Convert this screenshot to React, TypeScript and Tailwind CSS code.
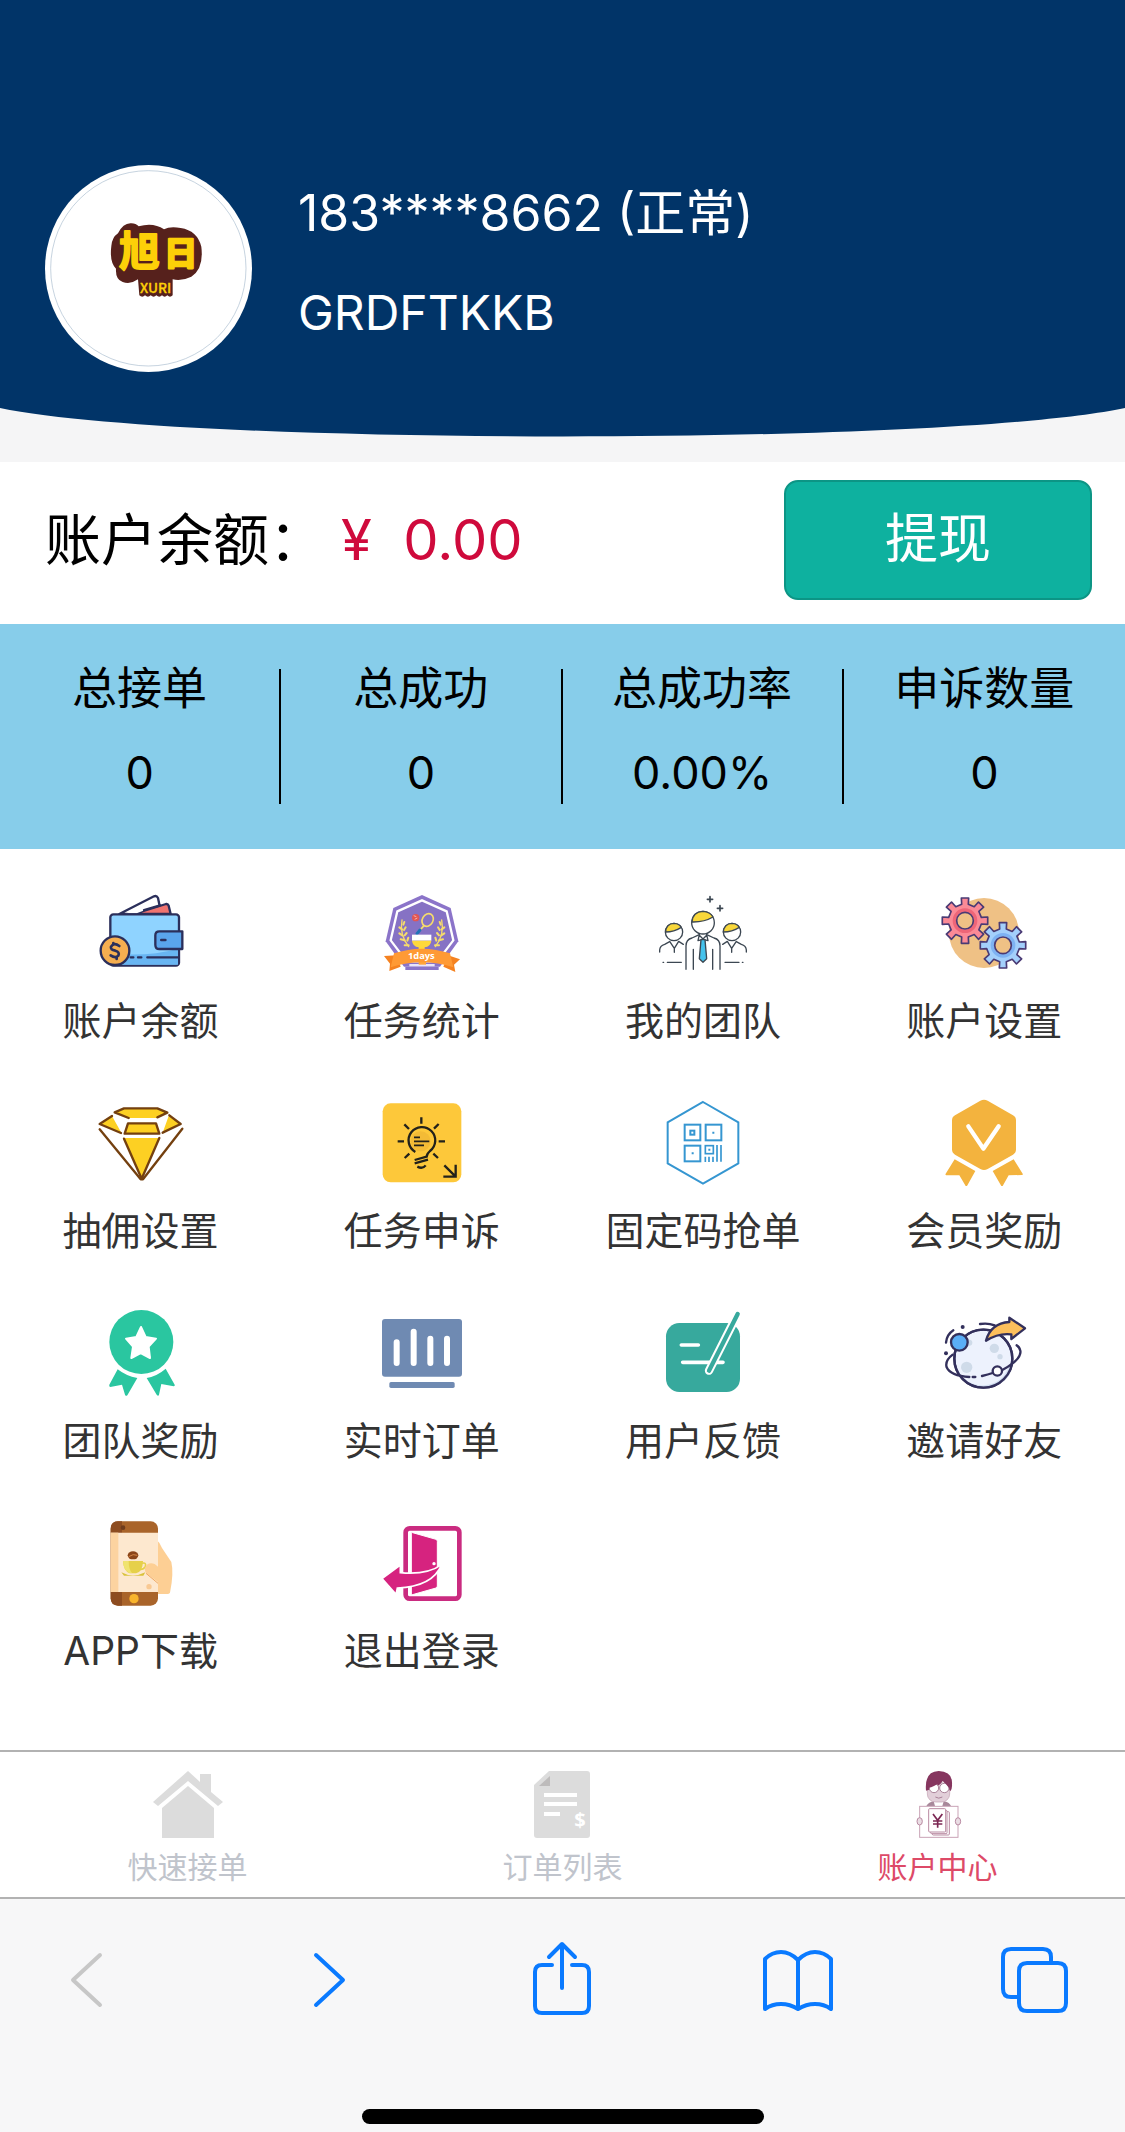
import { ReactNode } from "react";

function WalletIcon() {
  return (
    <svg viewBox="108 51 270 270" className="size-[90px]" aria-hidden="true">
      <g stroke="#2b2f5b" strokeWidth="7" strokeLinejoin="round" strokeLinecap="round">
        <path d="M178 132 L282 79 Q290 76 294 84 L304 132Z" fill="#fff" />
        <path d="M222 132 L318 102 Q324 101 326 107 L332 132Z" fill="#f0736f" />
        <path d="M196 130 L250 110 L250 122 L230 130Z" fill="#fff" stroke="none" />
        <path d="M252 120 L300 106" />
        <rect x="151" y="133" width="206" height="154" rx="9" fill="#8fd3ff" />
        <path d="M154 250 Q260 262 354 236 L354 284 L158 284Z" fill="#68b5f2" stroke="none" />
        <path d="M262 262 H354 M234 262 h10 M212 262 h8" />
        <path d="M367 184 H298 Q286 184 286 196 V224 Q286 237 298 237 H367Z" fill="#5aa5ec" />
        <path d="M304 210 h12" strokeWidth="8" />
        <circle cx="165" cy="242" r="43" fill="#f5ae50" />
        <path d="M178 228 Q162 216 153 230 Q150 240 166 242 Q180 246 175 257 Q166 266 152 256 M160 219 V224 M170 262 V267" fill="none" strokeWidth="8" />
      </g>
    </svg>
  );
}

function BadgeIcon() {
  return (
    <svg viewBox="951 51 270 270" className="size-[90px]" aria-hidden="true">
      <path d="M1086 75 L1172 114 L1195 214 L1140 290 L1032 290 L977 214 L1000 114Z" fill="#8b74c9" />
      <path d="M1086 91 L1160 124 L1180 211 L1132 274 L1040 274 L992 211 L1012 124Z" fill="#8672c4" stroke="#fff" strokeWidth="7" />
      <g fill="none" stroke="#f6dc6b" strokeLinecap="round">
        <path d="M1026 150 Q1018 195 1046 230 M1145 150 Q1154 195 1126 230" strokeWidth="4" />
        <path d="M1030 164 l3 -8 M1018 172 l8 6 M1032 180 l5 -8 M1018 190 l9 6 M1034 196 l6 -7 M1022 208 l12 3 M1042 212 l3 -9 M1034 226 l12 0 M1142 164 l-3 -8 M1153 172 l-8 6 M1139 180 l-5 -8 M1153 190 l-9 6 M1137 196 l-6 -7 M1149 208 l-12 3 M1129 212 l-3 -9 M1137 226 l-12 0" strokeWidth="6" />
        <ellipse cx="1103" cy="150" rx="16" ry="20" transform="rotate(30 1103 150)" strokeWidth="5" />
        <path d="M1092 167 L1082 178" strokeWidth="5" />
      </g>
      <path d="M1080 180 L1071 191" stroke="#2173b8" strokeWidth="9" strokeLinecap="round" />
      <circle cx="1067" cy="143" r="11" fill="#e25552" />
      <path d="M1061 137 l8 3 M1064 148 l8 -4" stroke="#f7b3a8" strokeWidth="3" />
      <path d="M1056 194 H1114 V212 H1056Z" fill="#fff" />
      <path d="M1056 212 H1114 Q1112 230 1094 232 V244 H1076 V232 Q1058 230 1056 212Z" fill="#ffd83c" />
      <path d="M1036 290 h100 v10 h-100Z" fill="#8b74c9" />
      <path d="M1048 282 h76 v7 h-76Z" fill="#e9e4fb" />
      <path d="M1076 270 h22 v14 h-22Z" fill="#ffa63b" />
      <path d="M972 258 L1010 256 L1022 290 L988 303 L990 281Z M1200 268 L1164 256 L1150 290 L1186 306 L1182 284Z" fill="#f58220" />
      <path d="M1002 250 Q1086 222 1170 250 L1180 292 Q1086 262 992 292Z" fill="#ff9a35" />
      <text x="1084" y="268" fontSize="28" fontWeight="700" fill="#fff" textAnchor="middle" className="font-['Open_Sans',sans-serif]">
        1days
      </text>
    </svg>
  );
}

function TeamIcon() {
  return (
    <svg viewBox="114 51 270 270" className="size-[90px]" aria-hidden="true">
      <g fill="none" stroke="#3c4752" strokeWidth="4" strokeLinecap="round" strokeLinejoin="round">
        <circle cx="249" cy="158" r="34" />
        <path d="M216 156 Q218 125 249 124 Q270 125 279 141 Q252 157 216 156Z" fill="#f8d73a" />
        <circle cx="162" cy="186" r="26" />
        <path d="M137 186 Q138 161 162 160 Q178 161 184 172 Q162 186 137 186Z" fill="#f8d73a" />
        <circle cx="336" cy="186" r="26" />
        <path d="M310 186 Q312 161 336 160 Q352 161 358 172 Q336 186 310 186Z" fill="#f8d73a" />
        <path d="M198 298 V228 Q198 208 216 204 L238 194 M300 298 V228 Q300 208 282 204 L260 194" />
        <path d="M220 238 V298 M278 238 V298" />
        <path d="M238 194 L234 212 L249 208 L264 212 L260 194 M238 196 L249 207 L260 196" />
        <path d="M243 209 H255 L260 266 L249 277 L238 266Z" fill="#45c2ec" />
        <path d="M119 246 V240 Q120 227 134 223 L149 215 M149 214 L163 235 L176 214 L190 223 M163 235 V247" />
        <path d="M379 246 V240 Q378 227 364 223 L349 215 M349 214 L335 235 L322 214 L308 223 M335 235 V247" />
        <path d="M142 277 H184 M129 277 h2 M315 277 H357 M367 277 h2" />
        <path d="M270 80 V96 M262 88 H278 M300 107 V123 M292 115 H308" strokeWidth="5" />
      </g>
    </svg>
  );
}

interface GearProps {
  cx: number;
  cy: number;
  color: string;
  shade: string;
}

function Gear({ cx, cy, color, shade }: GearProps) {
  const points: string[] = [];
  for (let i = 0; i < 8; i++) {
    const mid = (i * Math.PI) / 4;
    // root, tip, tip, root of each tooth
    for (const [offset, r] of [[-0.2, 50], [-0.16, 69], [0.16, 69], [0.2, 50]]) {
      points.push(`${cx + r * Math.cos(mid + offset)},${cy + r * Math.sin(mid + offset)}`);
    }
  }
  return (
    <>
      <polygon points={points.join(" ")} fill={color} stroke="#4a3a74" strokeWidth="5" strokeLinejoin="round" />
      <circle cx={cx} cy={cy} r="32" fill="none" stroke={shade} strokeWidth="10" />
      <circle cx={cx} cy={cy} r="25" fill="#efc185" stroke="#4a3a74" strokeWidth="5" />
    </>
  );
}

function GearsIcon() {
  return (
    <svg viewBox="957 51 270 270" className="size-[90px]" aria-hidden="true">
      <circle cx="1092" cy="189" r="105" fill="#efc185" />
      <Gear cx={1035} cy={152} color="#fb8a96" shade="#ee6678" />
      <Gear cx={1149} cy={226} color="#a3cffb" shade="#7eb2f3" />
    </svg>
  );
}

function DiamondIcon() {
  return (
    <svg viewBox="108 51 270 270" className="size-[90px]" aria-hidden="true">
      <g fill="none" stroke="#74400f" strokeWidth="7" strokeLinejoin="round" strokeLinecap="round">
        <path d="M164 97 L192 85 H292 L322 98 L292 114 H206Z" fill="#fdd023" stroke="none" />
        <path d="M206 114 L164 97 L192 85 H292 L322 98 L292 112" />
        <path d="M156 108 L184 158 L120 132Z M326 108 L308 158 L362 132Z" fill="#fdd023" stroke="none" />
        <path d="M156 108 L119 132 L183 159 M328 106 L362 132 L308 158" />
        <path d="M204 130 H288 L298 161 H194Z" fill="#fdd023" />
        <path d="M192 174 H298 L245 298Z" fill="#fdd023" stroke="none" />
        <path d="M192 176 L245 296 L298 174" />
        <path d="M119 148 L242 298 H249 L367 146" />
      </g>
    </svg>
  );
}

function BulbIcon() {
  return (
    <svg viewBox="951 51 270 270" className="size-[90px]" aria-hidden="true">
      <rect x="968" y="70" width="236" height="237" rx="24" fill="#fdc83a" />
      <circle cx="1082" cy="184" r="30" fill="#f3bb36" />
      <g fill="none" stroke="#23221b" strokeWidth="7">
        <path d="M1066 216 A40 40 0 1 1 1110 213 Q1100 222 1100 230 L1064 240" />
        <path d="M1064 250 L1104 239 M1072 260 Q1088 268 1097 256" />
        <path d="M1062 172 H1080 M1062 184 H1108 M1062 196 H1092" strokeWidth="5" />
        <path d="M1084 112 V131 M1033 133 L1047 147 M1136 132 L1122 146 M1013 184 H1032 M1136 184 H1155 M1034 234 L1048 221 M1134 234 L1120 221" />
        <path d="M1153 256 L1187 290 M1187 254 V290 H1150" />
      </g>
    </svg>
  );
}

function QrIcon() {
  return (
    <svg viewBox="114 51 270 270" className="size-[90px]" aria-hidden="true">
      <g fill="none" stroke="#3596d1" strokeWidth="6">
        <path d="M249 66 L355 127 V250 L249 311 L143 250 V127Z" />
        <rect x="194" y="134" width="47" height="47" />
        <rect x="257" y="134" width="47" height="47" />
        <rect x="194" y="197" width="47" height="47" />
        <rect x="211" y="152" width="12" height="12" />
        <rect x="256" y="197" width="24" height="24" strokeWidth="5" />
        <path d="M291 195 V245 M303 195 V245 M256 230 V246 M267 230 V246 M279 230 V246" strokeWidth="5" />
      </g>
      <path d="M277 155 h6 v6 h-6Z M215 217 h6 v6 h-6Z M265 206 h6 v6 h-6Z" fill="#3596d1" />
    </svg>
  );
}

function MemberIcon() {
  return (
    <svg viewBox="957 51 270 270" className="size-[90px]" aria-hidden="true">
      <path d="M1081 62 Q1092 57 1103 62 L1179 106 Q1188 111 1188 121 V208 Q1188 219 1179 224 L1103 267 Q1092 273 1081 267 L1005 224 Q996 219 996 208 V121 Q996 111 1005 106Z" fill="#f3b33e" />
      <path d="M1045 139 L1090 206 L1136 139" fill="none" stroke="#fff" strokeWidth="13" strokeLinecap="round" strokeLinejoin="round" />
      <path d="M1004 238 L1066 273 L1041 318 H1037 L1018 286 H979 Q975 285 977 281Z M1181 238 L1118 273 L1144 318 H1148 L1166 286 L1206 285 Q1210 284 1208 281Z" fill="#f3b33e" />
    </svg>
  );
}

function StarIcon() {
  return (
    <svg viewBox="108 51 270 270" className="size-[90px]" aria-hidden="true">
      <circle cx="244" cy="156" r="96" fill="#2ac6a0" />
      <path d="M243 111 L257 141 L288 146 L266 170 L270 204 L242 189 L214 204 L219 170 L198 146 L229 141Z" fill="#fff" stroke="#fff" strokeWidth="6" strokeLinejoin="round" />
      <path d="M173 238 Q198 258 232 264 L202 316 Q198 320 195 314 L186 284 L151 291 Q146 290 148 284Z M317 236 Q292 258 260 264 L290 314 Q295 320 297 314 L304 282 L341 289 Q346 288 344 284Z" fill="#2ac6a0" />
    </svg>
  );
}

function OrdersIcon() {
  return (
    <svg viewBox="951 51 270 270" className="size-[90px]" aria-hidden="true">
      <rect x="966" y="87" width="240" height="173" rx="9" fill="#6f8ab2" />
      <rect x="988" y="276" width="196" height="18" rx="5" fill="#6f8ab2" />
      <path d="M1010 157 V219 M1061 125 V219 M1111 146 V219 M1161 146 V219" stroke="#fff" strokeWidth="18" strokeLinecap="round" />
    </svg>
  );
}

function FeedbackIcon() {
  return (
    <svg viewBox="114 51 270 270" className="size-[90px]" aria-hidden="true">
      <rect x="138" y="99" width="222" height="207" rx="40" fill="#37a99d" />
      <path d="M184 165 H235 M188 217 H309" stroke="#fff" strokeWidth="11" strokeLinecap="round" />
      <path d="M353 72 L267 242" stroke="#fff" strokeWidth="25" strokeLinecap="round" />
      <path d="M353 72 L267 242" stroke="#37a99d" strokeWidth="13" strokeLinecap="round" />
    </svg>
  );
}

function InviteIcon() {
  return (
    <svg viewBox="957 51 270 270" className="size-[90px]" aria-hidden="true">
      <g fill="none" stroke="#33305c" strokeWidth="7" strokeLinecap="round" strokeLinejoin="round">
        <circle cx="1090" cy="206" r="87" fill="#edf2fd" />
        <path d="M1010 238 Q1040 290 1094 286 Q1150 280 1168 226 Q1180 262 1136 282 Q1088 302 1040 274Z" fill="#d3e0f2" stroke="none" />
        <g fill="#cfdbe9" stroke="none">
          <circle cx="1123" cy="175" r="14" />
          <circle cx="1140" cy="200" r="8" />
          <circle cx="1040" cy="232" r="17" />
          <circle cx="1048" cy="158" r="9" />
        </g>
        <circle cx="1090" cy="206" r="87" />
        <path d="M998 194 Q974 212 980 232 Q992 258 1048 261 M1058 261 h8 M1086 258 Q1104 254 1118 249 M1147 240 Q1206 208 1201 182 Q1198 170 1190 166" />
        <circle cx="1132" cy="243" r="14" fill="#fff" />
        <circle cx="1018" cy="157" r="25" fill="#5aaef6" />
        <path d="M978 158 Q980 134 1000 121 M1080 102 Q1104 98 1124 106" />
        <path d="M1098 152 Q1112 100 1168 96 V83 L1215 115 L1174 147 V133 Q1136 128 1098 152Z" fill="#fcbf5c" />
      </g>
      <circle cx="1028" cy="111" r="6" fill="#33305c" />
      <circle cx="978" cy="190" r="6" fill="#33305c" />
    </svg>
  );
}

function AppIcon() {
  return (
    <svg viewBox="108 51 270 270" className="size-[90px]" aria-hidden="true">
      <path d="M288 118 Q300 128 306 144 L334 186 Q342 220 330 278 Q328 282 322 282 H288Z" fill="#fdcf94" />
      <rect x="152" y="64" width="142" height="253" rx="22" fill="#a9642a" />
      <path d="M174 64 H186 V317 H174 Q152 317 152 295 V86 Q152 64 174 64Z" fill="#8d4c20" />
      <path d="M152 98 H294 V276 H152Z" fill="#fde8cf" />
      <path d="M152 98 H175 V276 H152Z" fill="#fcd3a0" />
      <circle cx="189" cy="83" r="7" fill="#6f3c1c" />
      <circle cx="222" cy="296" r="14" fill="#f8b42c" />
      <ellipse cx="219" cy="166" rx="16" ry="12" fill="#8b4518" />
      <path d="M206 170 Q220 160 232 166" stroke="#d58746" strokeWidth="3" fill="none" />
      <path d="M189 183 H249 Q248 216 228 220 H209 Q190 212 189 183Z" fill="#e6d04a" />
      <path d="M189 183 H206 Q206 208 216 219 H209 Q190 212 189 183Z" fill="#f0e36f" />
      <path d="M246 190 Q260 186 256 200 Q250 210 238 208" fill="none" stroke="#e6d04a" strokeWidth="5" />
      <path d="M184 217 Q218 236 256 217 L250 227 H192Z" fill="#d9c23c" />
      <path d="M254 206 Q262 184 284 192 L306 210 L306 276 L294 246 L262 222 Q254 216 254 206Z" fill="#fdcf94" />
      <path d="M258 220 L294 250" stroke="#f0a860" strokeWidth="3" />
      <circle cx="267" cy="260" r="8" fill="#f9c993" />
    </svg>
  );
}

function LogoutIcon() {
  return (
    <svg viewBox="951 51 270 270" className="size-[90px]" aria-hidden="true">
      <rect x="1037" y="85" width="161" height="211" rx="12" fill="#fff" stroke="#ca2b80" strokeWidth="14" />
      <path d="M1054 98 Q1054 97 1058 98 L1128 118 Q1132 119 1132 124 V258 Q1132 263 1128 264 L1054 285Z" fill="#d6237f" stroke="#fff" strokeWidth="3" />
      <circle cx="1122" cy="191" r="5" fill="#fff" />
      <path d="M966 236 L1021 195 V218 Q1100 226 1145 194 Q1118 260 1012 264 L1008 283Z" fill="#d6237f" stroke="#fff" strokeWidth="5" />
    </svg>
  );
}

function HomeIcon() {
  return (
    <svg viewBox="0 0 72 72" className="size-[72px]" aria-hidden="true">
      <path d="M36 2 L48 13 V5 H59 V23 L71 33 L66 37 L36 12 L6 37 L1 33Z M36 17 L62 39 V69 H10 V39Z" fill="#dcdcdc" />
    </svg>
  );
}

function ListIcon() {
  return (
    <svg viewBox="0 0 72 72" className="size-[72px]" aria-hidden="true">
      <path d="M22 2 H60 Q63 2 63 5 V66 Q63 69 60 69 H10 Q7 69 7 66 V16Z" fill="#dcdcdc" />
      <path d="M23 7 V17 H12Z" fill="#bdbbbb" />
      <path d="M17 24 H50 V28 H17Z M17 33 H50 V37 H17Z M17 43 H33 V47 H17Z" fill="#fff" />
      <text x="53" y="58" fontSize="20" fontWeight="700" fill="#fff" textAnchor="middle" className="font-['Noto_Sans',sans-serif]">
        $
      </text>
    </svg>
  );
}

function PersonIcon() {
  return (
    <svg viewBox="125 87 216 216" className="size-[72px]" aria-hidden="true">
      <path d="M198 198 Q204 186 222 184 L236 194 L252 184 Q268 188 272 198Z" fill="#a8889a" />
      <path d="M220 184 H250 L246 198 H224Z" fill="#fff" />
      <rect x="201" y="128" width="67" height="58" rx="24" fill="#e2cfd9" stroke="#c3a0b2" strokeWidth="2" />
      <path d="M197 152 Q192 94 235 93 Q278 94 275 134 Q276 146 270 154 Q262 138 248 122 Q236 142 197 152Z" fill="#86365f" />
      <circle cx="221" cy="144" r="14" fill="#fff" stroke="#a98198" strokeWidth="3" />
      <circle cx="252" cy="144" r="14" fill="#fff" stroke="#a98198" strokeWidth="3" />
      <path d="M202 144 Q222 140 247 122 Q258 132 268 146 Q276 96 235 95 Q196 98 202 144Z" fill="#86365f" />
      <path d="M225 171 Q235 178 246 171" fill="none" stroke="#a98198" strokeWidth="3" />
      <rect x="178" y="199" width="115" height="93" fill="#fff" stroke="#c9a3b6" strokeWidth="3" />
      <g fill="#fff" stroke="#b98aa2" strokeWidth="3">
        <rect x="216" y="215" width="51" height="70" rx="3" />
        <rect x="211" y="211" width="49" height="70" rx="3" />
        <rect x="205" y="206" width="51" height="70" rx="3" />
        <ellipse cx="178" cy="244" rx="8" ry="11" fill="#eadde4" />
        <ellipse cx="293" cy="244" rx="8" ry="11" fill="#eadde4" />
      </g>
      <path d="M218 222 L232 241 L246 222 M232 241 V263 M218 243 H246 M218 252 H246" fill="none" stroke="#7c2854" strokeWidth="5" />
    </svg>
  );
}

function Logo() {
  return (
    <svg viewBox="-135 -105 621 621" className="size-full" role="img" aria-label="XURI">
      <circle cx="175" cy="205" r="293" fill="none" stroke="#a9bccf" strokeWidth="2" />
      <path d="M84 100 Q100 68 124 70 Q138 70 146 79 Q190 66 222 88 Q240 78 272 84 Q322 92 334 140 Q342 206 304 230 Q276 244 248 238 V286 q-8 8 -16 0 q-8 8 -16 0 q-8 8 -17 0 q-8 8 -17 0 q-8 8 -17 0 q-8 8 -17 0 L144 238 Q122 254 98 246 Q76 238 78 206 Q58 186 64 138 Q66 112 84 100Z" fill="#56211c" />
      <g fill="#fdd008" stroke="#fdd008" strokeLinejoin="round" className="font-['Noto_Sans_CJK_SC',sans-serif]">
        <text x="88" y="199" fontSize="122" fontWeight="700" strokeWidth="6">
          旭
        </text>
        <text x="222" y="194" fontSize="100" fontWeight="700" strokeWidth="8">
          日
        </text>
        <text x="150" y="279" fontSize="41" fontWeight="500" strokeWidth="1">
          XURI
        </text>
      </g>
    </svg>
  );
}

interface Entry {
  label: string;
  icon: ReactNode;
}

const stats = [
  { label: "总接单", value: "0" },
  { label: "总成功", value: "0" },
  { label: "总成功率", value: "0.00%" },
  { label: "申诉数量", value: "0" },
];

const entries: Entry[] = [
  { label: "账户余额", icon: <WalletIcon /> },
  { label: "任务统计", icon: <BadgeIcon /> },
  { label: "我的团队", icon: <TeamIcon /> },
  { label: "账户设置", icon: <GearsIcon /> },
  { label: "抽佣设置", icon: <DiamondIcon /> },
  { label: "任务申诉", icon: <BulbIcon /> },
  { label: "固定码抢单", icon: <QrIcon /> },
  { label: "会员奖励", icon: <MemberIcon /> },
  { label: "团队奖励", icon: <StarIcon /> },
  { label: "实时订单", icon: <OrdersIcon /> },
  { label: "用户反馈", icon: <FeedbackIcon /> },
  { label: "邀请好友", icon: <InviteIcon /> },
  { label: "APP下载", icon: <AppIcon /> },
  { label: "退出登录", icon: <LogoutIcon /> },
];

const tabs = [
  { label: "快速接单", icon: <HomeIcon />, color: "text-[#c0c4cc]" },
  { label: "订单列表", icon: <ListIcon />, color: "text-[#c0c4cc]" },
  { label: "账户中心", icon: <PersonIcon />, color: "text-[#dd4a68]" },
];

const tools = [
  { name: "后退", color: "text-[#c7c7c7]", path: "M52 16 L25 41 L52 66" },
  { name: "前进", color: "text-[#0a7aff]", path: "M31 16 L58 41 L31 66" },
  {
    name: "分享",
    color: "text-[#0a7aff]",
    path: "M39 49 V6 M26 18 L39 5 L52 18 M29 26 H19 Q12 26 12 33 V67 Q12 74 19 74 H59 Q66 74 66 67 V33 Q66 26 59 26 H49",
  },
  {
    name: "书签",
    color: "text-[#0a7aff]",
    path: "M38 21 Q30 13 21 13 Q12 13 5 20 V70 Q12 65 21 65 Q30 65 38 70 Q46 65 55 65 Q64 65 71 70 V20 Q64 13 55 13 Q46 13 38 21Z M38 21 V70",
  },
  {
    name: "标签页",
    color: "text-[#0a7aff]",
    path: "M20 58 H14 Q6 58 6 50 V18 Q6 10 14 10 H46 Q54 10 54 18 V24 M30 24 H61 Q69 24 69 32 V64 Q69 72 61 72 H30 Q22 72 22 64 V32 Q22 24 30 24Z",
  },
];

function Header() {
  return (
    <header className="bg-[#f5f5f6] text-white">
      <div className="flex items-start gap-[46px] bg-[#013468] px-[45px] pt-[165px] pb-9">
        <div className="size-[207px] shrink-0 overflow-hidden rounded-full bg-white">
          <Logo />
        </div>
        <div className="flex flex-col gap-1 leading-[96px]">
          <p className="text-[50px]">183****8662 (正常)</p>
          <p className="text-[48px]">GRDFTKKB</p>
        </div>
      </div>
      <svg viewBox="0 0 1125 54" preserveAspectRatio="none" className="block h-[54px] w-full" aria-hidden="true">
        <path d="M0 0 C180 38 945 38 1125 0Z" fill="#013468" />
      </svg>
    </header>
  );
}

function Balance() {
  return (
    <section className="flex items-center justify-between bg-white pt-[18px] pr-[33px] pb-6 pl-[45px]">
      <p className="text-[56px] leading-[120px] text-black">
        账户余额：
        <span className="ml-4 text-[#cf0a3c]">¥&nbsp; 0.00</span>
      </p>
      <button className="h-[120px] w-[308px] rounded-[14px] border-2 border-[#0c9585] bg-[#0eb19f] text-[53px] text-white">
        提现
      </button>
    </section>
  );
}

function Stats() {
  return (
    <section className="grid grid-cols-4 bg-[#87cdea] py-[45px] text-center text-[45px] text-black">
      {stats.map((stat, i) => (
        <div key={stat.label} className={i < 3 ? "border-r-2 border-black" : ""}>
          <p className="h-[84px] leading-[40px]">{stat.label}</p>
          <p className="h-[51px] leading-[40px]">{stat.value}</p>
        </div>
      ))}
    </section>
  );
}

function App() {
  return (
    <div className="flex min-h-screen flex-col bg-white font-[Inter,'Noto_Sans_CJK_SC',sans-serif]">
      <Header />
      <Balance />
      <Stats />
      <main className="grid flex-1 auto-rows-[210px] grid-cols-4 pt-[38px]">
        {entries.map((entry) => (
          <a key={entry.label} href="#" className="flex flex-col items-center gap-4 text-[39px] leading-[56px] text-[#333333]">
            {entry.icon}
            {entry.label}
          </a>
        ))}
      </main>
      <nav className="grid h-[149px] grid-cols-3 border-y-2 border-[#b2b2b2] pt-[17px]">
        {tabs.map((tab) => (
          <a key={tab.label} href="#" className={`flex flex-col items-center text-[30px] leading-[52px] ${tab.color}`}>
            {tab.icon}
            {tab.label}
          </a>
        ))}
      </nav>
      <footer className="flex h-[233px] flex-col justify-between bg-[#f7f7f8] px-12 pt-10 pb-2">
        <div className="flex justify-between">
          {tools.map((tool) => (
            <button key={tool.name} aria-label={tool.name} className={tool.color}>
              <svg viewBox="0 0 80 80" className="size-20" fill="none" stroke="currentColor" strokeWidth="4" strokeLinecap="round" strokeLinejoin="round">
                <path d={tool.path} />
              </svg>
            </button>
          ))}
        </div>
        <div className="mx-auto h-[15px] w-[402px] rounded-full bg-black" />
      </footer>
    </div>
  );
}

export default App;
